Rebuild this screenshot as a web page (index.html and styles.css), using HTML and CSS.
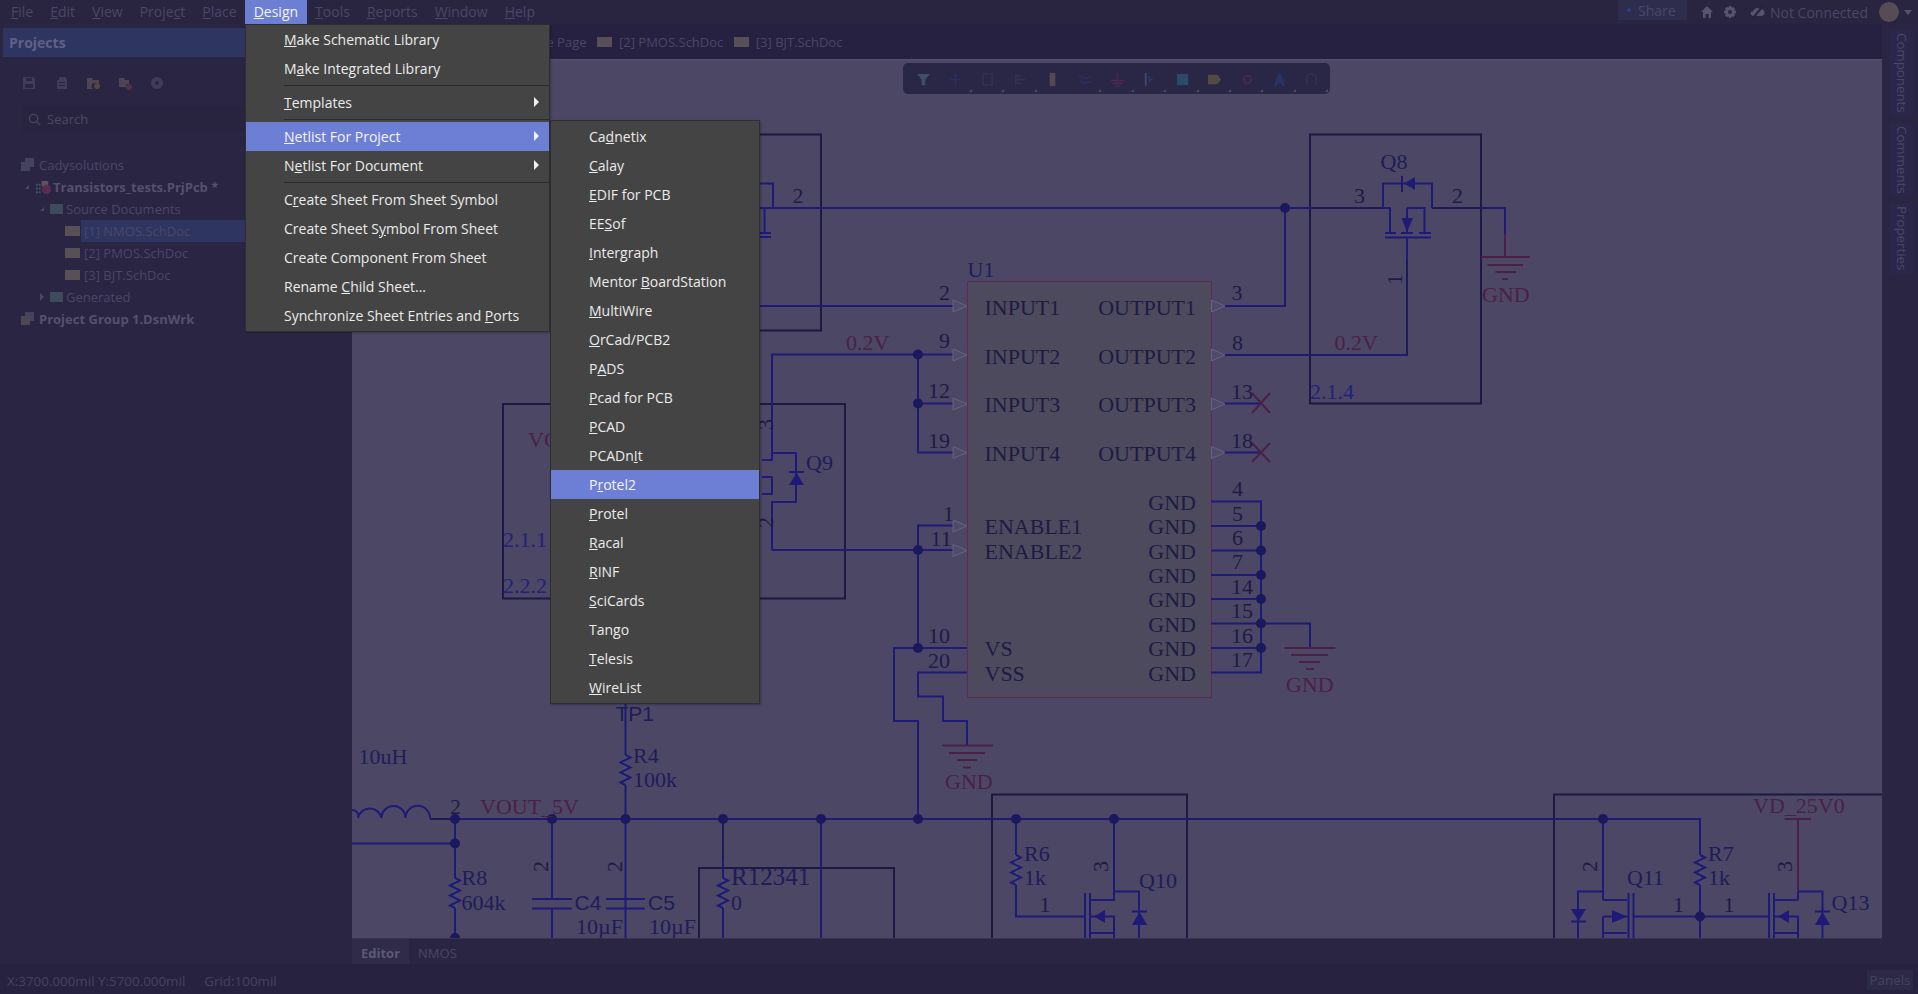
FILE: index.html
```html
<!DOCTYPE html>
<html lang="en">
<head>
  <meta charset="UTF-8">
  <title>Altium Designer - Design menu</title>
  <link rel="stylesheet" href="styles.css">
</head>
<body>

  <div class="app">
    <div class="menubar">
      <div class="menu-item"><u>F</u>ile</div>
      <div class="menu-item"><u>E</u>dit</div>
      <div class="menu-item"><u>V</u>iew</div>
      <div class="menu-item">Proje<u>c</u>t</div>
      <div class="menu-item"><u>P</u>lace</div>
      <div class="menu-item active"><u>D</u>esign</div>
      <div class="menu-item"><u>T</u>ools</div>
      <div class="menu-item"><u>R</u>eports</div>
      <div class="menu-item"><u>W</u>indow</div>
      <div class="menu-item"><u>H</u>elp</div>

      <div class="top-right">
        <div class="share"><span class="share-dot"></span>Share</div>
        <svg class="top-icon home" viewBox="0 0 14 14"><path d="M7 1 L13 7 H11 V13 H8.500 V9 H5.500 V13 H3 V7 H1 Z"/></svg>
        <svg class="top-icon gear" viewBox="0 0 14 14"><path fill-rule="evenodd" d="M5.800 1 H8.200 L8.600 2.700 L10.200 2 L12 3.800 L11.300 5.400 L13 5.800 V8.200 L11.300 8.600 L12 10.200 L10.200 12 L8.600 11.300 L8.200 13 H5.800 L5.400 11.300 L3.800 12 L2 10.200 L2.700 8.600 L1 8.200 V5.800 L2.700 5.400 L2 3.800 L3.800 2 L5.400 2.700 Z M7 5 A2 2 0 1 0 7 9 A2 2 0 1 0 7 5 Z"/></svg>
        <svg class="top-icon cloud" viewBox="0 0 16 14"><path d="M3 11 C0 10 0 6 3.500 6 C4 3 8 2 10 4 C13 4 15 6 14.500 8 C14.500 10 13 11 11 11 H7 Z"/><path class="cloud-cut" d="M3 13 L13 1"/></svg>
        <div class="conn">Not Connected</div>
        <div class="avatar"></div>
        <div class="caret"></div>
      </div>
    </div>

    <div class="main">
      <aside class="side">
        <div class="side-head">Projects</div>
        <div class="side-tools">
          <svg class="side-tool" viewBox="0 0 14 14"><path fill-rule="evenodd" d="M1 1 H11 L13 3 V13 H1 Z M4 2 V5 H10 V2 Z M3 8 V12 H11 V8 Z"/></svg>
          <svg class="side-tool" viewBox="0 0 14 14"><path fill-rule="evenodd" d="M5 1 H12 V3 H13 V13 H3 V4 H5 Z M5 6 V7 H11 V6 Z M5 9 V10 H11 V9 Z"/></svg>
          <svg class="side-tool tan" viewBox="0 0 14 14"><path d="M1 2 H6 L7 4 H13 V7 H9 A3 3 0 0 0 8 13 H1 Z"/><circle class="tan-dot" cx="11" cy="10" r="3"/></svg>
          <svg class="side-tool tan" viewBox="0 0 14 14"><path d="M1 2 H6 L7 4 H11 V8 H8 V11 H1 Z"/><circle class="red-dot" cx="11" cy="11" r="3"/></svg>
          <svg class="side-tool" viewBox="0 0 14 14"><path fill-rule="evenodd" d="M7 1 A6 6 0 1 0 7 13 A6 6 0 1 0 7 1 Z M7 5 A2 2 0 1 1 7 9 A2 2 0 1 1 7 5 Z"/></svg>
        </div>
        <div class="side-search">
          <svg class="search-icon" viewBox="0 0 14 14"><circle cx="6" cy="6" r="4.500"/><path d="M9.500 9.500 L13 13"/></svg>
          Search
        </div>
        <div class="tree">
          <div class="row lvl0"><svg class="ic-group" viewBox="0 0 16 14"><path d="M5 0 H14 V9 H5 Z"/><path d="M1 4 H10 V13 H1 Z"/></svg>Cadysolutions</div>
          <div class="row lvl1 bold"><span class="tw down"></span><svg class="ic-prj" viewBox="0 0 18 16"><path class="prj-grid" d="M1 4 H3 V6 H1 Z M1 8 H3 V10 H1 Z M1 12 H3 V14 H1 Z M4 4 H6 V6 H4 Z M4 8 H6 V10 H4 Z M4 12 H6 V14 H4 Z"/><path class="prj-doc" d="M7 1 H14 V7 H7 Z"/><circle class="prj-dot" cx="12" cy="10" r="5"/></svg>Transistors_tests.PrjPcb *</div>
          <div class="row lvl2"><span class="tw down"></span><span class="ic-folder"></span>Source Documents</div>
          <div class="row lvl3"><span class="ic-doc"></span><span class="sel">[1] NMOS.SchDoc</span></div>
          <div class="row lvl3"><span class="ic-doc"></span><span class="lbl">[2] PMOS.SchDoc</span></div>
          <div class="row lvl3"><span class="ic-doc"></span><span class="lbl">[3] BJT.SchDoc</span></div>
          <div class="row lvl2"><span class="tw right"></span><span class="ic-folder"></span>Generated</div>
          <div class="row lvl0 bold"><svg class="ic-group" viewBox="0 0 16 14"><path d="M5 0 H14 V9 H5 Z"/><path class="grp-tan" d="M1 4 H10 V13 H1 Z"/></svg>Project Group 1.DsnWrk</div>
        </div>
      </aside>

      <div class="center">
        <div class="doctabs">
          <div class="doctab">Home Page</div>
          <div class="doctab"><span class="ic-doc"></span>[2] PMOS.SchDoc</div>
          <div class="doctab"><span class="ic-doc"></span>[3] BJT.SchDoc</div>
        </div>

        <div class="canvas">
          <svg class="sheet" viewBox="352 59 1530 879" width="1530" height="879">
            <!-- sheet boxes -->
            <g class="box">
              <path d="M700 134.500 H821 V330.500 H700"/>
              <path d="M1310 403.500 V134.500 H1481 V403.500 Z"/>
              <path d="M503 404 H845 V598.500 H503 Z"/>
              <path d="M699 938 V868 H894 V938"/>
              <path d="M992 938 V794.500 H1187 V938"/>
              <path d="M1882 794.500 H1554 V938"/>
            </g>

            <!-- U1 -->
            <rect class="ic" x="967.500" y="281.500" width="244" height="416"/>

            <!-- nets -->
            <g class="wire">
              <path d="M760 183.500 H773 V208"/>
              <path d="M764.500 208 V233"/>
              <path d="M760 233 H771 M760 237 H771"/>
              <path d="M760 208 H1383"/>
              <path d="M1285 208 V306 H1224"/>
              <path d="M760 306 H953"/>
              <path d="M1383 208 V183.500 H1432 V208"/>
              <path d="M1402 176 V192"/>
              <path d="M1383 208 H1390 V233 M1385 233 H1396"/>
              <path d="M1407 208 V233 M1401 233 H1413"/>
              <path d="M1407 208 H1424.500 V233 M1419 233 H1431"/>
              <path d="M1385 237.500 H1431" stroke-width="3"/>
              <path d="M1407 238 V355 H1224"/>
              <path d="M1432 208 H1505 V234"/>

              <path d="M953 354.500 H772 V460 H762"/>
              <path d="M918 354.500 V452.500 H953"/>
              <path d="M918 403.500 H953"/>
              <path d="M762 477 H772 V494 H762"/>
              <path d="M772 453 H796 V502 H772 V550"/>
              <path d="M796 472 V453"/>
              <path d="M789 472 H804"/>
              <path d="M772 550 H953"/>
              <path d="M953 525.500 H918 V648"/>
              <path d="M967 648 H894 V721 H918 V819"/>
              <path d="M967 672.500 H918 V696.500 H943 V721 H967 V745.500"/>

              <path d="M1224 403.500 H1261 M1224 452.500 H1261"/>
              <path d="M1211 501.500 H1261 V672.500 H1211"/>
              <path d="M1211 526 H1261 M1211 550.500 H1261 M1211 575 H1261 M1211 599 H1261 M1211 623.500 H1310 V648 M1211 648 H1261"/>

              <path d="M430 819 H1700 V938"/>
              <path d="M352 843.500 H455 M455 819 V938"/>
              <path d="M552 819 V899 M552 908.500 V938"/>
              <path d="M532 899 H572 M532 908.500 H572"/>
              <path d="M625.500 703 V938"/>
              <path d="M606 899 H645 M606 908.500 H645"/>
              <path d="M723 819 V938"/>
              <path d="M821 819 V938"/>

              <path d="M1016 819 V916.500 H1085"/>
              <path d="M1114 819 V900 H1090"/>
              <path d="M1090 916.500 H1114 V938 M1090 933 H1114"/>
              <path d="M1085 893 V938 M1090 893 V938"/>
              <path d="M1114 891.500 H1139 V938"/>
              <path d="M1132 911.500 H1147"/>

              <path d="M1603 819 V900 M1603 891.500 H1578 V938"/>
              <path d="M1571 921.500 H1586"/>
              <path d="M1603 900 H1627 M1603 916.500 H1627 V916 M1603 933 H1627 M1603 916.500 V938"/>
              <path d="M1628.500 893 V938 M1633.500 893 V938"/>
              <path d="M1633 916.500 H1769"/>
              <path d="M1769 893 V938 M1774 893 V938"/>
              <path d="M1774 900 H1798 M1774 916.500 H1798 V938 M1774 933 H1798"/>
              <path d="M1798 891.500 V900 M1798 891.500 H1822.500 V938"/>
              <path d="M1815 911.500 H1830"/>

              <!-- resistors -->
              <path class="wipe" d="M625.500 755 v30"/>
              <path d="M625.500 755 l5 2.500 l-10 5 l10 5 l-10 5 l10 5 l-10 5 l5 2.500"/>
              <path class="wipe" d="M455 878 v30"/>
              <path d="M455 878 l5 2.500 l-10 5 l10 5 l-10 5 l10 5 l-10 5 l5 2.500"/>
              <path class="wipe" d="M723 878 v30"/>
              <path d="M723 878 l5 2.500 l-10 5 l10 5 l-10 5 l10 5 l-10 5 l5 2.500"/>
              <path class="wipe" d="M1016 855 v30"/>
              <path d="M1016 855 l5 2.500 l-10 5 l10 5 l-10 5 l10 5 l-10 5 l5 2.500"/>
              <path class="wipe" d="M1700 855 v30"/>
              <path d="M1700 855 l5 2.500 l-10 5 l10 5 l-10 5 l10 5 l-10 5 l5 2.500"/>

              <!-- inductor -->
              <path d="M352 810 A6 6 0 0 1 358 818 A12 12 0 0 1 381.500 818 A12 12 0 0 1 405.500 818 A12 12 0 0 1 430 818"/>
            </g>

            <g class="wire-dark">
              <path d="M1310 208 H1383"/>
              <path d="M1432 208 H1481"/>
              <path d="M430 819 H455"/>
              <path d="M1211 306 H1224"/>
              <path d="M723 819 V860"/>
              <path d="M1407 260 V355"/>
            </g>

            <g class="solid">
              <path d="M1404 183.500 L1415 177 V190 Z"/>
              <path d="M1401.500 218 H1413 L1407 232 Z"/>
              <path d="M789 485 H804 L796.500 473 Z"/>
              <path d="M1094 916.500 L1105 910 V923 Z"/>
              <path d="M1132 925 H1147 L1139.500 912 Z"/>
              <path d="M1571 909 H1586 L1578.500 921 Z"/>
              <path d="M1627 916.500 L1612 910 V923 Z"/>
              <path d="M1778 916.500 L1789 910 V923 Z"/>
              <path d="M1815 925 H1830 L1822.500 912 Z"/>
            </g>

            <g class="dots">
              <circle cx="1285" cy="208" r="5"/>
              <circle cx="918" cy="354.500" r="5"/>
              <circle cx="918" cy="403.500" r="5"/>
              <circle cx="918" cy="550" r="5"/>
              <circle cx="918" cy="648" r="5"/>
              <circle cx="1261" cy="526" r="5"/>
              <circle cx="1261" cy="550.500" r="5"/>
              <circle cx="1261" cy="575" r="5"/>
              <circle cx="1261" cy="599" r="5"/>
              <circle cx="1261" cy="623.500" r="5"/>
              <circle cx="1261" cy="648" r="5"/>
              <circle cx="455" cy="819" r="5"/>
              <circle cx="455" cy="843.500" r="5"/>
              <circle cx="455" cy="938" r="5"/>
              <circle cx="552" cy="819" r="5"/>
              <circle cx="625.500" cy="819" r="5"/>
              <circle cx="723" cy="819" r="5"/>
              <circle cx="821" cy="819" r="5"/>
              <circle cx="918" cy="819" r="5"/>
              <circle cx="1016" cy="819" r="5"/>
              <circle cx="1114" cy="819" r="5"/>
              <circle cx="1603" cy="819" r="5"/>
              <circle cx="1700" cy="916.500" r="5"/>
            </g>

            <!-- pin arrows -->
            <g class="pin">
              <path d="M953 300 L967 306 L953 312 Z"/>
              <path d="M953 349 L967 355 L953 361 Z"/>
              <path d="M953 398 L967 404 L953 410 Z"/>
              <path d="M953 446.500 L967 452.500 L953 458.500 Z"/>
              <path d="M953 520 L967 526 L953 532 Z"/>
              <path d="M953 544.500 L967 550.500 L953 556.500 Z"/>
              <path d="M1211.500 300 L1225 306 L1211.500 312 Z"/>
              <path d="M1211.500 349 L1225 355 L1211.500 361 Z"/>
              <path d="M1211.500 398 L1225 404 L1211.500 410 Z"/>
              <path d="M1211.500 446.500 L1225 452.500 L1211.500 458.500 Z"/>
            </g>

            <!-- power and no-erc -->
            <g class="power">
              <path d="M1505 234 V257 M1481 257 H1530 M1487.500 265 H1523 M1495.500 272 H1516 M1502 279 H1508"/>
              <path d="M1284.500 648 H1335.500 M1291 655 H1328 M1299 662 H1320 M1306 669 H1314"/>
              <path d="M942 745.500 H993 M949 753 H985 M957 760 H977 M963 767.500 H971"/>
              <path d="M1784.500 819 H1811 M1798 819 V891"/>
              <path d="M1252 413 L1270 393 M1252 393 L1270 413 M1252 462 L1270 443 M1252 443 L1270 462" stroke-width="1"/>
            </g>

            <!-- labels -->
            <g class="t-name">
              <text x="984.500" y="314.500">INPUT1</text>
              <text x="984.500" y="363.500">INPUT2</text>
              <text x="984.500" y="412">INPUT3</text>
              <text x="984.500" y="461">INPUT4</text>
              <text x="984.500" y="534">ENABLE1</text>
              <text x="984.500" y="559">ENABLE2</text>
              <text x="984.500" y="656">VS</text>
              <text x="984.500" y="681">VSS</text>
            </g>
            <g class="t-name end">
              <text x="1196" y="314.500">OUTPUT1</text>
              <text x="1196" y="363.500">OUTPUT2</text>
              <text x="1196" y="412">OUTPUT3</text>
              <text x="1196" y="461">OUTPUT4</text>
              <text x="1196" y="510">GND</text>
              <text x="1196" y="534">GND</text>
              <text x="1196" y="559">GND</text>
              <text x="1196" y="583">GND</text>
              <text x="1196" y="607">GND</text>
              <text x="1196" y="632">GND</text>
              <text x="1196" y="656">GND</text>
              <text x="1196" y="681">GND</text>
            </g>
            <g class="t-num">
              <text x="792.500" y="203">2</text>
              <text x="939" y="300">2</text>
              <text x="1231.500" y="300">3</text>
              <text x="1354" y="203">3</text>
              <text x="1452" y="203">2</text>
              <text x="1232" y="350">8</text>
              <text x="1231" y="399">13</text>
              <text x="1231" y="448">18</text>
              <text x="939" y="348">9</text>
              <text x="928" y="398">12</text>
              <text x="928" y="447.500">19</text>
              <text x="943" y="521">1</text>
              <text x="930.500" y="546">11</text>
              <text x="928" y="642.500">10</text>
              <text x="928" y="667.500">20</text>
              <text x="1232" y="496">4</text>
              <text x="1232" y="520.500">5</text>
              <text x="1232" y="545">6</text>
              <text x="1232" y="569">7</text>
              <text x="1231" y="593.500">14</text>
              <text x="1231" y="618">15</text>
              <text x="1231" y="642.500">16</text>
              <text x="1231" y="667">17</text>
              <text x="450" y="814">2</text>
              <text x="1039.500" y="911.500">1</text>
              <text x="1673" y="911.500">1</text>
              <text x="1723.500" y="911.500">1</text>
              <text transform="rotate(-90 1402 285)" x="1402" y="285">1</text>
              <text transform="rotate(-90 548 872)" x="548" y="872">2</text>
              <text transform="rotate(-90 622 872)" x="622" y="872">2</text>
              <text transform="rotate(-90 1108 872)" x="1108" y="872">3</text>
              <text transform="rotate(-90 1597 872)" x="1597" y="872">2</text>
              <text transform="rotate(-90 1792 872)" x="1792" y="872">3</text>
              <text transform="rotate(-90 773 430)" x="773" y="430">3</text>
              <text transform="rotate(-90 773 528)" x="773" y="528">2</text>
            </g>
            <g class="t-part">
              <text x="967.500" y="277">U1</text>
              <text x="1380.500" y="169">Q8</text>
              <text x="806" y="470">Q9</text>
              <text x="1139" y="888">Q10</text>
              <text x="1627" y="885">Q11</text>
              <text x="1831.500" y="910">Q13</text>
              <text x="633" y="762.500">R4</text>
              <text x="633" y="786.500">100k</text>
              <text x="461.500" y="885">R8</text>
              <text x="461.500" y="910">604k</text>
              <text class="wide" x="731" y="885">R12341</text>
              <text x="731" y="910">0</text>
              <text x="1024" y="861">R6</text>
              <text x="1024" y="885">1k</text>
              <text x="1708" y="861">R7</text>
              <text x="1708" y="885">1k</text>
              <text x="358.500" y="764">10uH</text>
              <text x="576" y="934">10µF</text>
              <text x="649" y="934">10µF</text>
            </g>
            <g class="t-part sans">
              <text x="615.500" y="720.500">TP1</text>
              <text x="574.500" y="910">C4</text>
              <text x="648" y="910">C5</text>
            </g>
            <g class="t-sheet">
              <text x="1310" y="399">2.1.4</text>
              <text x="503" y="546.500">2.1.1</text>
              <text x="503" y="593">2.2.2</text>
            </g>
            <g class="t-net">
              <text x="846" y="350">0.2V</text>
              <text x="1334.500" y="350">0.2V</text>
              <text x="1482" y="301.500">GND</text>
              <text x="1286" y="691.500">GND</text>
              <text x="945" y="788.500">GND</text>
              <text x="528" y="447">VCC</text>
              <text x="480" y="814">VOUT_5V</text>
              <text x="1753" y="813">VD_25V0</text>
            </g>
          </svg>

          <div class="sch-bar">
            <div class="tool"><svg viewBox="0 0 16 16"><path class="t-teal" d="M1 2 H15 L10 8 V14 H6 V8 Z"/></svg></div>
            <div class="tool more"><svg viewBox="0 0 16 16"><path class="s-blue" d="M8 1 V15 M2 8 H14"/></svg></div>
            <div class="tool more"><svg viewBox="0 0 16 16"><path class="s-gray" d="M3 2 H13 V14 H3 Z"/></svg></div>
            <div class="tool more"><svg viewBox="0 0 16 16"><path class="s-gray" d="M3 2 V14 M3 4 H9 M3 8 H13 M3 12 H9"/></svg></div>
            <div class="tool"><svg viewBox="0 0 16 16"><rect class="t-tan" x="5" y="1" width="6" height="14"/></svg></div>
            <div class="tool more"><svg viewBox="0 0 16 16"><path class="s-blue" d="M1 4 L8 7 L15 5 M1 9 L8 12 L15 10"/></svg></div>
            <div class="tool more"><svg viewBox="0 0 16 16"><path class="s-red" d="M8 1 V9 M1 9 H15 M3 12 H13 M5 15 H11"/></svg></div>
            <div class="tool more"><svg viewBox="0 0 16 16"><rect class="t-gray" x="3" y="1" width="2" height="14"/><path class="t-blue" d="M7 4 L12 8 L7 12 Z"/></svg></div>
            <div class="tool more"><svg viewBox="0 0 16 16"><rect class="t-cyan" x="2" y="2" width="12" height="12"/></svg></div>
            <div class="tool more"><svg viewBox="0 0 16 16"><path class="t-tan2" d="M1 3 H11 L15 8 L11 13 H1 Z"/></svg></div>
            <div class="tool more"><svg viewBox="0 0 16 16"><circle class="s-red" cx="8" cy="8" r="4"/></svg></div>
            <div class="tool more"><svg viewBox="0 0 16 16"><path class="t-blue" d="M7 1 H9 L14 15 H11 L10 12 H6 L5 15 H2 Z"/></svg></div>
            <div class="tool more"><svg viewBox="0 0 16 16"><path class="s-gray" d="M3 14 V7 A5 5 0 0 1 13 7 V14"/></svg></div>
          </div>
        </div>

        <div class="edtabs">
          <div class="edtab on">Editor</div>
          <div class="edtab">NMOS</div>
        </div>
      </div>

      <div class="strip">
        <div class="vtab">Components</div>
        <div class="vtab">Comments</div>
        <div class="vtab">Properties</div>
      </div>
    </div>

    <footer class="status">
      <span>X:3700.000mil Y:5700.000mil</span>
      <span class="grid">Grid:100mil</span>
      <span class="panels">Panels</span>
    </footer>
  </div>

  <!-- open menus -->
  <div class="dropdown design-menu">
    <div class="dd-row"><u>M</u>ake Schematic Library</div>
    <div class="dd-row">M<u>a</u>ke Integrated Library</div>
    <div class="dd-sep"></div>
    <div class="dd-row sub"><u>T</u>emplates</div>
    <div class="dd-sep"></div>
    <div class="dd-row sub hot"><u>N</u>etlist For Project</div>
    <div class="dd-row sub">N<u>e</u>tlist For Document</div>
    <div class="dd-sep"></div>
    <div class="dd-row">C<u>r</u>eate Sheet From Sheet Symbol</div>
    <div class="dd-row">Create Sheet S<u>y</u>mbol From Sheet</div>
    <div class="dd-row">Create Component From Sheet</div>
    <div class="dd-row">Rename <u>C</u>hild Sheet...</div>
    <div class="dd-row">Synchronize Sheet Entries and <u>P</u>orts</div>
  </div>

  <div class="dropdown netlist-menu">
    <div class="dd-row">Ca<u>d</u>netix</div>
    <div class="dd-row"><u>C</u>alay</div>
    <div class="dd-row"><u>E</u>DIF for PCB</div>
    <div class="dd-row">EE<u>S</u>of</div>
    <div class="dd-row"><u>I</u>ntergraph</div>
    <div class="dd-row">Mentor <u>B</u>oardStation</div>
    <div class="dd-row"><u>M</u>ultiWire</div>
    <div class="dd-row"><u>O</u>rCad/PCB2</div>
    <div class="dd-row">P<u>A</u>DS</div>
    <div class="dd-row"><u>P</u>cad for PCB</div>
    <div class="dd-row"><u>P</u>CAD</div>
    <div class="dd-row">PCADn<u>I</u>t</div>
    <div class="dd-row hot">P<u>r</u>otel2</div>
    <div class="dd-row"><u>P</u>rotel</div>
    <div class="dd-row"><u>R</u>acal</div>
    <div class="dd-row"><u>R</u>INF</div>
    <div class="dd-row"><u>S</u>ciCards</div>
    <div class="dd-row">Tan<u>g</u>o</div>
    <div class="dd-row"><u>T</u>elesis</div>
    <div class="dd-row"><u>W</u>ireList</div>
  </div>

</body>
</html>
```

FILE: styles.css
```css
:root {
  --bar-bg: #27223f;
  --panel-bg: #2a2543;
  --dim-text: #4a4768;
  --menu-bg: #444444;
  --menu-hot: #6d7fd4;
  --net-blue: #1f1a78;
  --net-dark: #1d1a42;
  --net-red: #4c2046;
}

* {
  margin: 0;
  padding: 0;
  box-sizing: border-box;
}

body {
  width: 1918px;
  height: 994px;
  overflow: hidden;
  background: var(--bar-bg);
  font-family: 'Open Sans', sans-serif;
  font-size: 14px;
  color: var(--dim-text);
}

.app {
  height: 994px;
  display: flex;
  flex-direction: column;
}

/* top menu bar */
.menubar {
  height: 24px;
  flex: none;
  display: flex;
  align-items: center;
  padding-left: 2.500px;
  background: #29243f;
}

.menu-item {
  height: 24px;
  line-height: 23px;
  padding: 0 8.500px;
}

.menu-item.active {
  background: var(--menu-hot);
  color: #f2f2f2;
}

.top-right {
  margin-left: auto;
  display: flex;
  align-items: center;
  height: 24px;
}

.share {
  width: 69px;
  height: 20px;
  margin-top: -4px;
  display: flex;
  align-items: center;
  gap: 7px;
  padding-left: 9px;
  background: #2e2d4e;
}

.share-dot {
  width: 4px;
  height: 4px;
  border-radius: 50%;
  background: #2c3f86;
}

.top-icon {
  width: 14px;
  height: 14px;
  fill: #57546f;
}

.home { margin-left: 13px; }
.gear { margin-left: 9px; }

.cloud {
  width: 16px;
  margin-left: 13px;
}

.cloud-cut {
  stroke: var(--bar-bg);
  stroke-width: 2;
}

.conn { margin-left: 4px; }

.avatar {
  width: 20px;
  height: 20px;
  margin-left: 11px;
  border-radius: 50%;
  background: #574c55;
}

.caret {
  width: 0;
  height: 0;
  margin: 0 6px 0 5px;
  border-left: 4px solid transparent;
  border-right: 4px solid transparent;
  border-top: 5px solid #55526d;
}

.main {
  flex: 1;
  display: flex;
  min-height: 0;
}

/* projects panel */
.side {
  width: 352px;
  flex: none;
  background: var(--panel-bg);
  padding: 4px 4px 0 3px;
}

.side-head {
  height: 29px;
  line-height: 29px;
  padding-left: 6px;
  background: #2f3561;
  color: #5f6087;
  font-weight: 700;
}

.side-tools {
  display: flex;
  align-items: center;
  gap: 18px;
  height: 34px;
  margin-top: 9px;
  padding-left: 19px;
}

.side-tool {
  width: 14px;
  height: 14px;
  fill: #403d5a;
}

.side-tool.tan { fill: #4e4552; }
.tan-dot { fill: #544640; }
.red-dot { fill: #522f4b; }

.side-search {
  height: 26px;
  margin: 6px 0 0 19px;
  padding-left: 6px;
  display: flex;
  align-items: center;
  gap: 6px;
  background: #282440;
  font-size: 13px;
}

.search-icon {
  width: 13px;
  height: 13px;
  fill: none;
  stroke: #45425f;
  stroke-width: 1.500;
}

.tree {
  margin-top: 22px;
  font-size: 13px;
}

.row {
  height: 22px;
  display: flex;
  align-items: center;
  gap: 3px;
}

.row.bold { font-weight: 700; color: #54516f; }
.lvl0 { padding-left: 17px; }
.lvl1 { padding-left: 22px; }
.lvl2 { padding-left: 37px; }
.lvl3 { padding-left: 62px; }

.tw {
  width: 0;
  height: 0;
  margin-right: 3px;
}

.tw.down {
  border-left: 4px solid transparent;
  border-bottom: 4px solid #4a4766;
}

.tw.right {
  border-top: 4px solid transparent;
  border-bottom: 4px solid transparent;
  border-left: 4px solid #4a4766;
}

.ic-group {
  width: 16px;
  height: 14px;
  fill: #45425e;
}

.grp-tan { fill: #4f4655; }

.ic-prj {
  width: 17px;
  height: 15px;
  margin-right: -2px;
}

.prj-grid { fill: #3a5a66; }
.prj-doc { fill: #5a5360; }
.prj-dot { fill: #5c2c4e; }

.ic-folder {
  width: 13px;
  height: 10px;
  border-radius: 1px;
  background: #3e4b5c;
}

.ic-doc {
  width: 15px;
  height: 10px;
  flex: none;
  background: #584f57;
}

.lbl { padding-left: 1px; }

.sel {
  flex: 1;
  height: 22px;
  line-height: 22px;
  padding-left: 3px;
  margin-left: -2px;
  background: #2f3561;
}

/* document area */
.center {
  flex: 1;
  min-width: 0;
  display: flex;
  flex-direction: column;
}

.doctabs {
  height: 35px;
  flex: none;
  display: flex;
  align-items: center;
  gap: 10.500px;
  padding: 1px 0 0 165px;
  background: #262140;
  font-size: 13px;
}

.doctab {
  display: flex;
  align-items: center;
  gap: 7px;
}

.canvas {
  position: relative;
  flex: 1;
  min-height: 0;
  overflow: hidden;
  background-color: #4f4b69;
  border-top: 1px solid #55516f;
}

.sheet {
  display: block;
  margin-top: -1px;
  background-image:
    linear-gradient(#4b4765, #4b4765),
    linear-gradient(#4b4765, #4b4765);
  background-size: 1px 100%, 100% 1px;
  background-repeat: repeat-x, repeat-y;
  background-position: 273px 0, 0 174px;
}

.box path {
  fill: none;
  stroke: var(--net-dark);
  stroke-width: 2;
}

.ic {
  fill: #4c4a5c;
  stroke: #5f2a52;
  stroke-width: 1;
}

.wire path {
  fill: none;
  stroke: var(--net-blue);
  stroke-width: 2;
}

.wire path.wipe {
  stroke: #4f4b69;
  stroke-width: 4;
}

.wire-dark path {
  fill: none;
  stroke: #1e1a58;
  stroke-width: 2;
}

.solid path { fill: var(--net-blue); }
.dots circle { fill: #1c185e; }

.pin path {
  fill: #4f4b69;
  stroke: #66637f;
  stroke-width: 1;
}

.power path {
  fill: none;
  stroke: var(--net-red);
  stroke-width: 2;
}

.sheet text {
  font-family: 'Liberation Serif', serif;
  font-size: 22px;
}

.t-name, .t-num { fill: #1e1b44; }
.t-name.end { text-anchor: end; }
.t-part { fill: #1f1c58; }
.sheet .t-part .wide { font-size: 25px; }
.sheet .t-part.sans text { font-family: 'Liberation Sans', sans-serif; font-size: 21px; }
.t-sheet { fill: #25207a; }
.t-net { fill: var(--net-red); }

/* placement toolbar */
.sch-bar {
  position: absolute;
  left: 551px;
  top: 3px;
  width: 427px;
  height: 31px;
  display: flex;
  padding: 1px 0 0 4px;
  border-radius: 5px;
  background: #2a2746;
}

.tool {
  position: relative;
  width: 32.400px;
  display: flex;
  align-items: center;
  justify-content: center;
}

.tool svg {
  width: 15px;
  height: 15px;
  opacity: 0.55;
}

.tool.more::after {
  content: '';
  position: absolute;
  right: 0;
  bottom: 2px;
  border-left: 3px solid transparent;
  border-bottom: 3px solid #4d4a68;
}

.t-teal { fill: #4d7186; }
.t-tan { fill: #7b6458; }
.t-tan2 { fill: #75673f; }
.t-gray { fill: #5f5e80; }
.t-blue { fill: #274080; }
.t-cyan { fill: #2f6a85; }

.s-blue { fill: none; stroke: #2a3778; stroke-width: 1.500; }
.s-gray { fill: none; stroke: #3b3960; stroke-width: 1.500; }
.s-red { fill: none; stroke: #6c2b55; stroke-width: 1.500; }

.edtabs {
  height: 26px;
  flex: none;
  display: flex;
  background: #2a2542;
  font-size: 13px;
  border-top: 1px solid #37334f;
}

.edtab {
  height: 25px;
  line-height: 28px;
  padding: 0 9px;
}

.edtab.on {
  background: #2f2b49;
  color: #5c5977;
  font-weight: 700;
}

/* right dock strip */
.strip {
  width: 36px;
  flex: none;
  display: flex;
  flex-direction: column;
  align-items: flex-end;
  gap: 7px;
  padding: 6px 5px 0 0;
  background: #2a2543;
  font-size: 13.300px;
}

.vtab {
  width: 23px;
  writing-mode: vertical-rl;
  line-height: 23px;
  padding: 3px 0;
  background: #2b274a;
}

/* status bar */
.status {
  height: 30px;
  flex: none;
  display: flex;
  align-items: center;
  padding: 4px 0 0 7px;
  background: #27223f;
  font-size: 13.400px;
  color: #45425f;
}

.grid { margin-left: 19px; }

.panels {
  margin: -2px 5px 0 auto;
  width: 46px;
  height: 20px;
  line-height: 20px;
  text-align: center;
  background: #2d2a47;
}

/* open dropdown menus */
.dropdown {
  position: absolute;
  padding: 1px 0;
  background: var(--menu-bg);
  border: 1px solid #2d2d33;
  box-shadow: 1px 1px 2px rgba(0, 0, 0, 0.25);
  color: #ebebeb;
}

.design-menu {
  left: 245px;
  top: 24px;
  width: 305px;
  padding-top: 0;
}

.netlist-menu {
  left: 550px;
  top: 120px;
  width: 210px;
}

.dd-row {
  position: relative;
  height: 29px;
  line-height: 29px;
  padding-left: 38px;
}

.dd-row.hot {
  background: var(--menu-hot);
  color: #f4f4f4;
}

.dd-row.sub::after {
  content: '';
  position: absolute;
  right: 10px;
  top: 9px;
  border-top: 5px solid transparent;
  border-bottom: 5px solid transparent;
  border-left: 5px solid #f0f0f0;
}

.dd-sep {
  height: 5px;
  margin-left: 38px;
  position: relative;
}

.dd-sep::before {
  content: '';
  position: absolute;
  left: 0;
  right: 0;
  top: 2px;
  height: 1px;
  background: #2b2b2b;
}
```
